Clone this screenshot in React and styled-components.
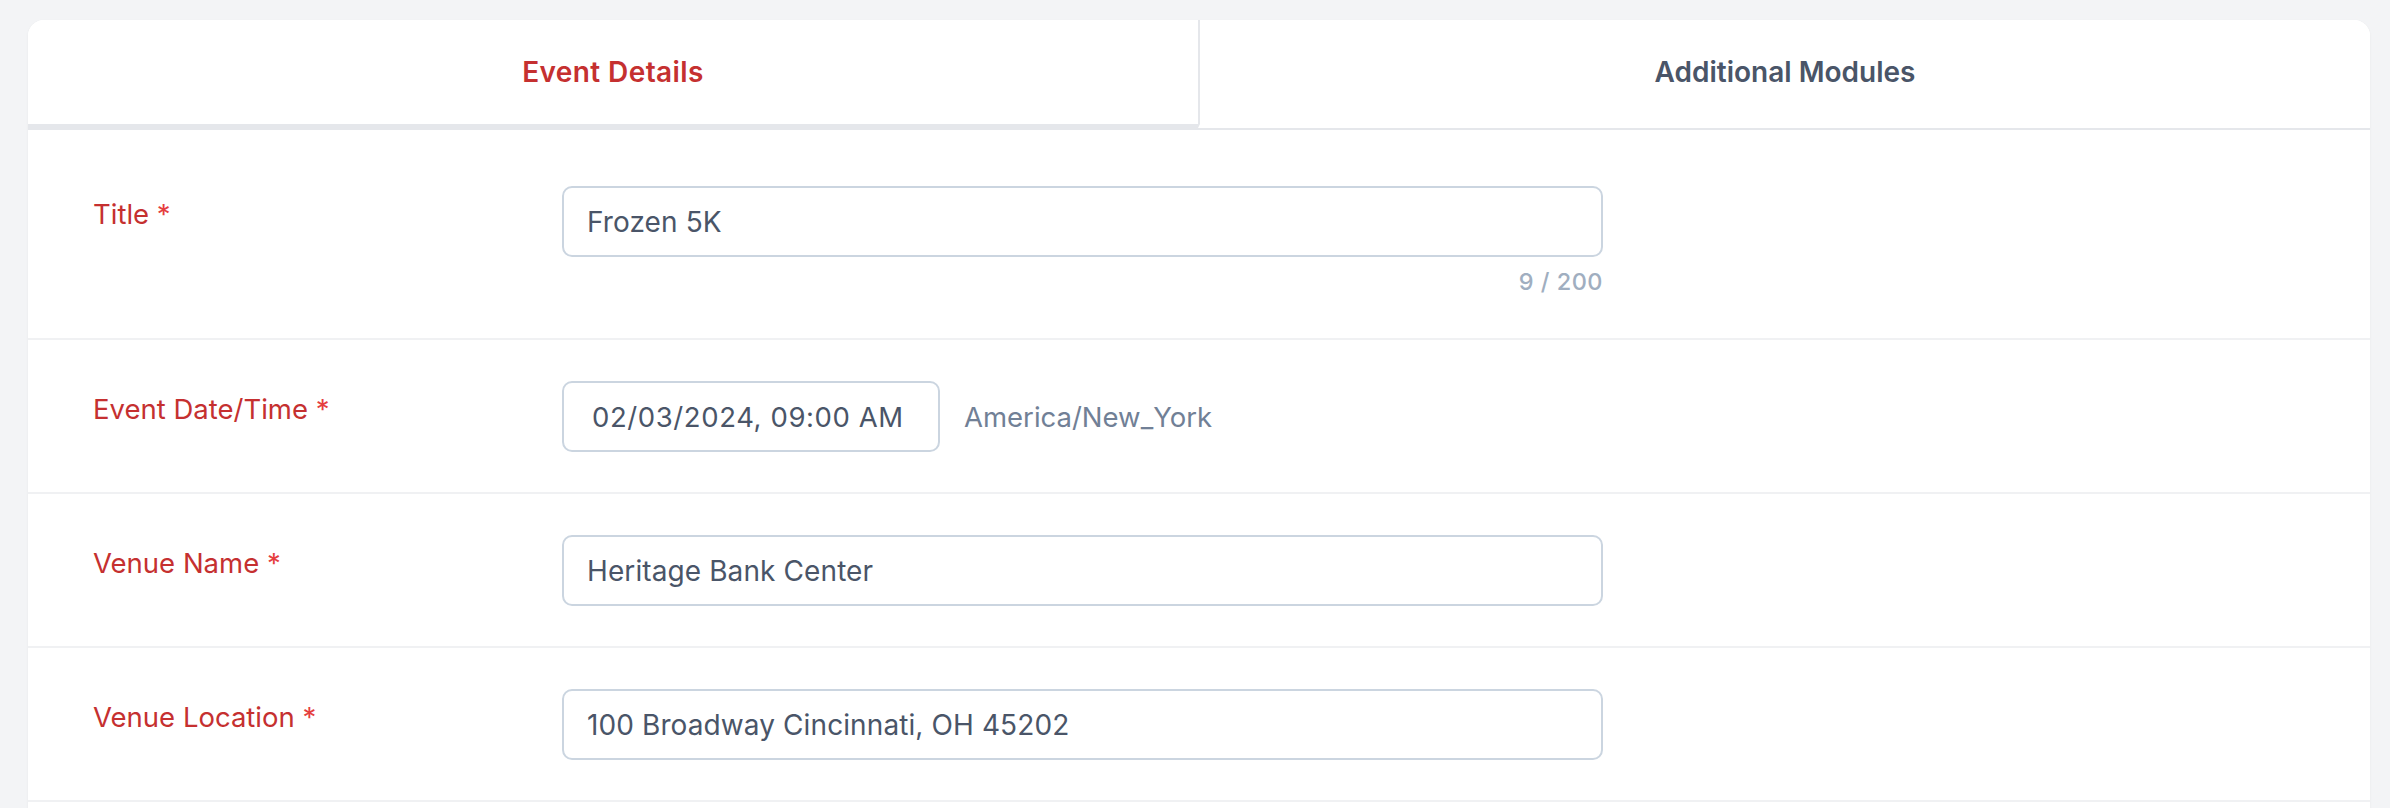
import { useState } from "react";
import styled, { createGlobalStyle } from "styled-components";

const GlobalStyle = createGlobalStyle`
  html, body {
    margin: 0;
    padding: 0;
    background: #f3f4f6;
    font-family: Inter, "Noto Sans", "Liberation Sans", sans-serif;
  }
  * {
    box-sizing: border-box;
  }
`;

const fields = [
  { label: "Title", value: "Frozen 5K", max: 200 },
  { label: "Event Date/Time", value: "02/03/2024, 09:00 AM", date: true, zone: "America/New_York" },
  { label: "Venue Name", value: "Heritage Bank Center" },
  { label: "Venue Location", value: "100 Broadway Cincinnati, OH 45202" },
];

const App = () => {
  const [tab, setTab] = useState(0);

  return (
    <Page>
      <GlobalStyle />
      <Card>
        <TabList>
          {["Event Details", "Additional Modules"].map((name, i) => (
            <Tab key={name} active={tab === i} onClick={() => setTab(i)}>
              {name}
            </Tab>
          ))}
        </TabList>

        <Form>
          {fields.map((f) => (
            <Row key={f.label}>
              <Label>
                {f.label} <span>*</span>
              </Label>
              <Field>
                {f.date ? (
                  <DateLine>
                    <Input date readOnly value={f.value} />
                    <Zone>{f.zone}</Zone>
                  </DateLine>
                ) : (
                  <Input readOnly value={f.value} />
                )}
                {f.max && (
                  <Counter>
                    {f.value.length} / {f.max}
                  </Counter>
                )}
              </Field>
            </Row>
          ))}
        </Form>
      </Card>
    </Page>
  );
};

const Page = styled.div`
  padding: 20px 20px 0 28px;
  height: 808px;
  overflow: hidden;
`;

const Card = styled.div`
  background: #fff;
  border-radius: 16px 16px 0 0;
  box-shadow: 0 1px 3px rgba(0, 0, 0, 0.05);
  min-height: 900px;
  overflow: hidden;
`;

const TabList = styled.div`
  display: flex;
  border-bottom: 2px solid #e5e7eb;
`;

const Tab = styled.button`
  flex: 1;
  background: #fff;
  border: none;
  border-bottom: 4px solid ${({ active }) => (active ? "#e5e7eb" : "transparent")};
  padding: 32px 0;
  font-family: inherit;
  font-size: 28px;
  line-height: 40px;
  font-weight: 600;
  letter-spacing: ${({ active }) => (active ? "0.4px" : "0")};
  color: ${({ active }) => (active ? "#c53030" : "#4a5568")};
  cursor: pointer;

  & + & {
    border-left: 2px solid #e5e7eb;
  }
`;

const Form = styled.div`
  padding-top: 15px;
`;

const Row = styled.div`
  display: flex;
  align-items: flex-start;
  padding: 41px 0 40px 65px;
  border-bottom: 2px solid #f0f1f3;
`;

const Label = styled.div`
  width: 469px;
  flex-shrink: 0;
  padding-top: 8px;
  font-size: 27.5px;
  line-height: 40px;
  color: #c53030;

  span {
    color: #e53e3e;
  }
`;

const Field = styled.div`
  width: 1041px;
  display: flex;
  flex-direction: column;
`;

const DateLine = styled.div`
  display: flex;
  align-items: center;
  gap: 24px;
`;

const Input = styled.input`
  width: ${({ date }) => (date ? "378px" : "100%")};
  height: 71px;
  padding: ${({ date }) => (date ? "0 6px 0 28px" : "0 23px")};
  border: 2px solid #cbd5e0;
  border-radius: 10px;
  background: #fff;
  font-family: inherit;
  font-size: ${({ date }) => (date ? "27.5px" : "28px")};
  letter-spacing: ${({ date }) => (date ? "0.6px" : "0.1px")};
  color: #4a5568;
  outline: none;
`;

const Zone = styled.span`
  font-size: 27.5px;
  color: #718096;
`;

const Counter = styled.div`
  margin-top: 8px;
  text-align: right;
  font-size: 23.5px;
  line-height: 33px;
  font-weight: 500;
  letter-spacing: 0.5px;
  color: #a0aec0;
`;

export default App;
